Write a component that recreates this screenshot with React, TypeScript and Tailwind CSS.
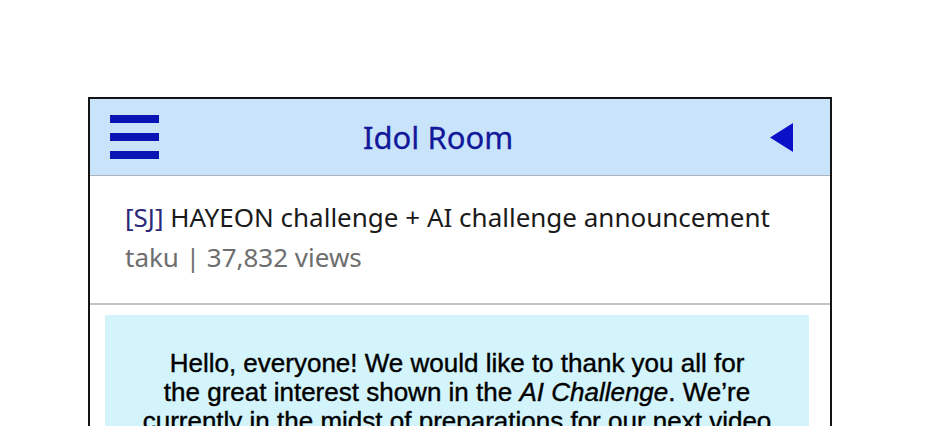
export default function App() {
  return (
    <div className="min-h-screen bg-white pt-[97px] pl-[88px]">
      <div className="w-[744px] border-2 border-b-0 border-[#141414] h-[340px] overflow-hidden">
        <header className="h-[77px] bg-[#c9e4fa] border-b border-[#a9b4bc] flex items-center">
          <div className="ml-[20px] flex flex-col gap-[10px]">
            <span className="block w-[49px] h-[8px] bg-[#0a14b4]" />
            <span className="block w-[49px] h-[8px] bg-[#0a14b4]" />
            <span className="block w-[49px] h-[8px] bg-[#0a14b4]" />
          </div>
          <h1 className="ml-[204px] text-[31px] leading-none text-[#12189a] font-['Noto_Sans',sans-serif] [-webkit-text-stroke:0.3px_#12189a]">
            Idol Room
          </h1>
          <svg className="ml-auto mr-[36px]" width="24" height="29" viewBox="0 0 24 29">
            <polygon points="0,14.5 23,0 23,29" fill="#0a10c8" />
          </svg>
        </header>

        <section className="h-[129px] border-b-2 border-[#c4c4c4] px-[35px] pt-[21px] font-['Noto_Sans',sans-serif]">
          <p className="text-[26px] leading-[40px] text-[#1a1a1a]">
            <span className="text-[#2a2a78]">[SJ]</span> HAYEON challenge + AI challenge announcement
          </p>
          <p className="text-[26px] leading-[40px] text-[#6e6e6e]">taku | 37,832 views</p>
        </section>

        <div className="ml-[15px] mr-[21px] mt-[10px] bg-[#d3f4fb] pt-[34px] pb-8 text-center font-['Liberation_Sans',Arial,sans-serif] text-[26px] leading-[29px] text-black [-webkit-text-stroke:0.4px_#000]">
          Hello, everyone! We would like to thank you all for
          <br />
          the great interest shown in the <i>AI Challenge</i>. We’re
          <br />
          currently in the midst of preparations for our next video
        </div>
      </div>
    </div>
  );
}
